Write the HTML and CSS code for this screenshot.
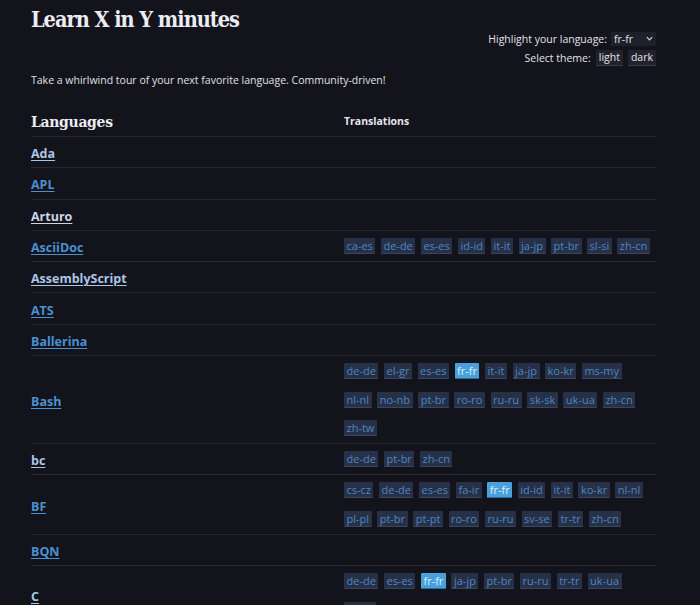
FILE: index.html
```html
<!DOCTYPE html>
<html lang="en">
<head>
<meta charset="utf-8">
<title>Learn X in Y minutes</title>
<link rel="stylesheet" href="styles.css">
</head>
<body>
<div class="page">
  <header class="top">
    <h1 class="title">Learn X in Y minutes</h1>
    <div class="controls">
      <div class="ctrl-row">
        <span>Highlight your language:</span>
        <span class="select">fr-fr<svg class="chev" viewBox="0 0 8 5" width="7" height="5"><path d="M1 1 L4 4 L7 1" fill="none" stroke="#d0d0dc" stroke-width="1.4"/></svg></span>
      </div>
      <div class="ctrl-row">
        <span>Select theme:</span>
        <span class="btn">light</span>
        <span class="btn">dark</span>
      </div>
    </div>
  </header>
  <p class="tagline">Take a whirlwind tour of your next favorite language. Community-driven!</p>

  <div class="table">
    <div class="row head">
      <div class="lang"><span class="h-lang">Languages</span></div>
      <div class="trans"><span class="h-trans">Translations</span></div>
    </div>
    <div class="row"><div class="lang"><a class="v">Ada</a></div><div class="trans"></div></div>
    <div class="row"><div class="lang"><a>APL</a></div><div class="trans"></div></div>
    <div class="row"><div class="lang"><a class="v2">Arturo</a></div><div class="trans"></div></div>
    <div class="row"><div class="lang"><a>AsciiDoc</a></div><div class="trans">
      <span class="b">ca-es</span><span class="b">de-de</span><span class="b">es-es</span><span class="b">id-id</span><span class="b">it-it</span><span class="b">ja-jp</span><span class="b">pt-br</span><span class="b">sl-si</span><span class="b">zh-cn</span>
    </div></div>
    <div class="row"><div class="lang"><a class="v">AssemblyScript</a></div><div class="trans"></div></div>
    <div class="row"><div class="lang"><a>ATS</a></div><div class="trans"></div></div>
    <div class="row"><div class="lang"><a>Ballerina</a></div><div class="trans"></div></div>
    <div class="row"><div class="lang"><a>Bash</a></div><div class="trans">
      <span class="b">de-de</span><span class="b">el-gr</span><span class="b">es-es</span><span class="b hl">fr-fr</span><span class="b">it-it</span><span class="b">ja-jp</span><span class="b">ko-kr</span><span class="b">ms-my</span><span class="b">nl-nl</span><span class="b">no-nb</span><span class="b">pt-br</span><span class="b">ro-ro</span><span class="b">ru-ru</span><span class="b">sk-sk</span><span class="b">uk-ua</span><span class="b">zh-cn</span><span class="b">zh-tw</span>
    </div></div>
    <div class="row"><div class="lang"><a class="v">bc</a></div><div class="trans">
      <span class="b">de-de</span><span class="b">pt-br</span><span class="b">zh-cn</span>
    </div></div>
    <div class="row"><div class="lang"><a>BF</a></div><div class="trans">
      <span class="b">cs-cz</span><span class="b">de-de</span><span class="b">es-es</span><span class="b">fa-ir</span><span class="b hl">fr-fr</span><span class="b">id-id</span><span class="b">it-it</span><span class="b">ko-kr</span><span class="b">nl-nl</span><span class="b">pl-pl</span><span class="b">pt-br</span><span class="b">pt-pt</span><span class="b">ro-ro</span><span class="b">ru-ru</span><span class="b">sv-se</span><span class="b">tr-tr</span><span class="b">zh-cn</span>
    </div></div>
    <div class="row"><div class="lang"><a>BQN</a></div><div class="trans"></div></div>
    <div class="row"><div class="lang"><a class="v">C</a></div><div class="trans">
      <span class="b">de-de</span><span class="b">es-es</span><span class="b hl">fr-fr</span><span class="b">ja-jp</span><span class="b">pt-br</span><span class="b">ru-ru</span><span class="b">tr-tr</span><span class="b">uk-ua</span><span class="b">zh-cn</span>
    </div></div>
  </div>
</div>
</body>
</html>
```

FILE: styles.css
```css
html, body {
  margin: 0;
  padding: 0;
  background: #13131c;
  color: #e2e2ea;
  font-family: "Open Sans", "Noto Sans", sans-serif;
}
.page {
  width: 625px;
  padding: 0 0 0 31px;
}
.top {
  display: flex;
  justify-content: space-between;
  align-items: flex-start;
  padding-top: 6px;
}
.title {
  margin: 0;
  font-family: "DejaVu Serif Condensed", "DejaVu Serif", serif;
  font-weight: bold;
  font-size: 21.5px;
  line-height: 28px;
  letter-spacing: -1px;
  color: #ececf2;
}
.controls {
  margin-top: 25px;
  display: flex;
  flex-direction: column;
  align-items: flex-end;
  gap: 4px;
  font-size: 10.5px;
}
.ctrl-row {
  display: flex;
  align-items: center;
  gap: 5px;
  height: 15px;
}
.select {
  display: inline-flex;
  align-items: center;
  justify-content: space-between;
  width: 39px;
  height: 14px;
  padding: 0 3px 0 3px;
  background: #20202c;
  border-radius: 1px;
  font-size: 10.5px;
  margin-left: -1px;
}
.chev { margin-left: 4px; }
.btn {
  display: inline-block;
  padding: 0 3px;
  height: 15px;
  line-height: 15px;
  background: #22222e;
  border-bottom: 1px solid #3a3a4c;
  font-size: 10.5px;
}
.tagline {
  margin: 7px 0 0;
  font-size: 10.5px;
  line-height: 16px;
  color: #e0e0e8;
}
.table {
  margin-top: 17px;
}
.row {
  display: grid;
  grid-template-columns: 313px 1fr;
  align-items: center;
  border-bottom: 1px solid #262632;
  min-height: 30.3px;
}
.row.head {
  min-height: 31px;
  align-items: center;
}
.h-lang {
  font-family: "DejaVu Serif Condensed", "DejaVu Serif", serif;
  font-weight: bold;
  font-size: 15.5px;
  letter-spacing: -0.3px;
  color: #ececf2;
}
.h-trans {
  font-size: 10.5px;
  font-weight: bold;
  color: #e6e6ee;
}
.lang a {
  font-size: 12.5px;
  font-weight: bold;
  color: #4b91d0;
  text-decoration: underline;
  text-underline-offset: 2px;
}
.lang a.v { color: #a9c6e6; }
.lang a.v2 { color: #cdd6e4; }
.trans {
  display: flex;
  flex-wrap: wrap;
  column-gap: 5.6px;
  row-gap: 12.5px;
  padding: 7px 5px 7px 0;
}
.trans:empty { padding: 0; }
.b {
  display: inline-block;
  height: 15px;
  line-height: 15px;
  padding: 0 2.5px;
  font-size: 11px;
  color: #4f86c0;
  background: #263047;
  border-bottom: 1px solid #3a4560;
  border-radius: 1px;
}
.b.hl {
  background: #4aa0da;
  color: #dcefff;
  border-bottom-color: #2f6c9c;
}
```
